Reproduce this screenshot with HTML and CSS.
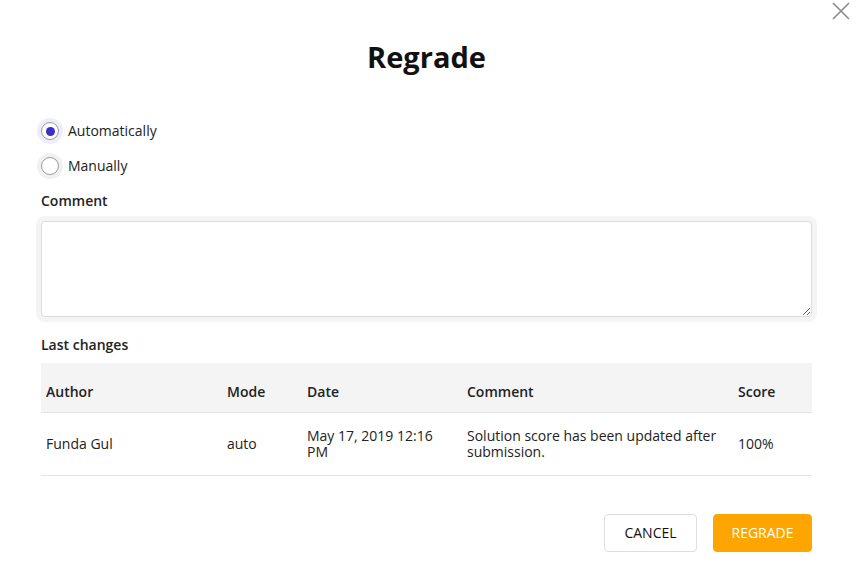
FILE: index.html
```html
<!DOCTYPE html>
<html>
<head>
<meta charset="utf-8">
<link rel="stylesheet" href="styles.css">
</head>
<body>
<div class="modal">
  <button class="close" aria-label="Close">
    <svg width="20" height="20" viewBox="0 0 20 20"><path d="M2 2 L18 18 M18 2 L2 18" stroke="#8a8a8a" stroke-width="1.6" fill="none"/></svg>
  </button>
  <h1 class="title">Regrade</h1>
  <div class="radios">
    <label class="radio-row"><span class="radio checked"><span class="dot"></span></span><span class="radio-label">Automatically</span></label>
    <label class="radio-row"><span class="radio"></span><span class="radio-label">Manually</span></label>
  </div>
  <div class="field-label">Comment</div>
  <textarea class="comment"></textarea>
  <div class="section-label">Last changes</div>
  <table class="changes">
    <colgroup>
      <col class="c-author"><col class="c-mode"><col class="c-date"><col class="c-comment"><col class="c-score">
    </colgroup>
    <thead>
      <tr><th>Author</th><th>Mode</th><th>Date</th><th>Comment</th><th>Score</th></tr>
    </thead>
    <tbody>
      <tr><td>Funda Gul</td><td>auto</td><td>May 17, 2019 12:16 PM</td><td>Solution score has been updated after submission.</td><td>100%</td></tr>
    </tbody>
  </table>
  <div class="actions">
    <button class="btn btn-cancel">CANCEL</button>
    <button class="btn btn-primary">REGRADE</button>
  </div>
</div>
</body>
</html>
```
FILE: styles.css
```css
* { box-sizing: border-box; }
html, body { margin: 0; padding: 0; background: #fff; }
body {
  font-family: "Open Sans", "Liberation Sans", sans-serif;
  color: #222;
  font-size: 14px;
}
.modal {
  position: relative;
  width: 859px;
  height: 578px;
  padding: 37px 47px 0 41px;
  display: flex;
  flex-direction: column;
}
.close {
  position: absolute;
  top: 1px;
  right: 8px;
  border: 0;
  background: none;
  padding: 0;
  width: 20px;
  height: 20px;
  cursor: pointer;
}
.title {
  margin: 0;
  font-size: 29px;
  line-height: 40px;
  font-weight: 700;
  color: #111;
  text-align: center;
}
.radios {
  display: flex;
  flex-direction: column;
  gap: 17px;
  margin-top: 45px;
}
.radio-row {
  display: flex;
  align-items: center;
  height: 18px;
}
.radio {
  width: 18px;
  height: 18px;
  border-radius: 50%;
  border: 1px solid #9a9a9a;
  background: #fff;
  box-shadow: 0 0 0 4px #f1f1f1;
  display: flex;
  align-items: center;
  justify-content: center;
}
.radio.checked {
  box-shadow: 0 0 0 4px #eceefb;
}
.dot {
  width: 9px;
  height: 9px;
  border-radius: 50%;
  background: #3a2fc6;
}
.radio-label {
  margin-left: 9px;
  line-height: 20px;
}
.field-label, .section-label {
  font-weight: 600;
  line-height: 20px;
}
.field-label { margin-top: 16px; }
.comment {
  margin-top: 10px;
  width: 100%;
  height: 96px;
  border: 1px solid #dcdcdc;
  border-radius: 4px;
  box-shadow: 0 0 0 5px #f4f4f4;
  resize: vertical;
  font-family: inherit;
  display: block;
}
.section-label { margin-top: 18px; }
.changes {
  margin-top: 8px;
  width: 771px;
  border-collapse: collapse;
  table-layout: fixed;
}
.c-author { width: 181px; }
.c-mode { width: 80px; }
.c-date { width: 160px; }
.c-comment { width: 271px; }
.c-score { width: 79px; }
.changes th {
  background: #f4f4f4;
  height: 49px;
  text-align: left;
  font-weight: 600;
  padding: 8px 5px 0;
  border-bottom: 1px solid #e3e3e3;
  color: #222;
}
.changes td {
  height: 63px;
  padding: 0 5px;
  line-height: 16px;
  border-bottom: 1px solid #e3e3e3;
  vertical-align: middle;
}
.actions {
  display: flex;
  justify-content: flex-end;
  gap: 16px;
  margin-top: 38px;
}
.btn {
  height: 38px;
  border-radius: 4px;
  font-family: inherit;
  font-size: 14px;
  padding: 0;
  cursor: pointer;
}
.btn-cancel {
  width: 93px;
  background: #fff;
  border: 1px solid #dedede;
  color: #111;
}
.btn-primary {
  width: 99px;
  background: #ffa500;
  border: 1px solid #ffa500;
  color: #fff;
}
```
